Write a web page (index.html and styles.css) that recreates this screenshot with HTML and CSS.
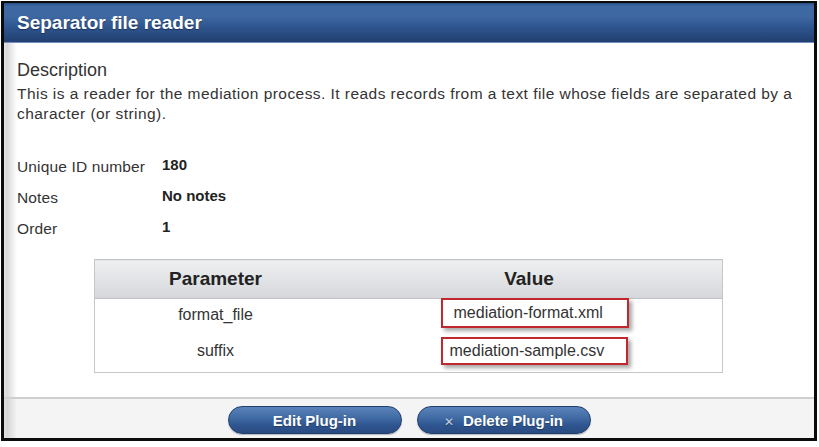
FILE: index.html
```html
<!DOCTYPE html>
<html>
<head>
<meta charset="utf-8">
<title>Separator file reader</title>
<link rel="stylesheet" href="styles.css">
</head>
<body>
<div class="frame">
  <div class="header">Separator file reader</div>
  <div class="content">
    <div class="desc-title">Description</div>
    <p class="desc">This is a reader for the mediation process. It reads records from a text file whose fields are separated by a character (or string).</p>
    <div class="props">
      <div class="label">Unique ID number</div><div class="value">180</div>
      <div class="label">Notes</div><div class="value">No notes</div>
      <div class="label">Order</div><div class="value">1</div>
    </div>
    <table class="params">
      <thead>
        <tr><th class="c1">Parameter</th><th class="c2">Value</th></tr>
      </thead>
      <tbody>
        <tr><td class="c1">format_file</td><td class="c2 val"><span class="mark mark1">mediation-format.xml</span></td></tr>
        <tr><td class="c1">suffix</td><td class="c2 val"><span class="mark mark2">mediation-sample.csv</span></td></tr>
      </tbody>
    </table>
  </div>
  <div class="footer">
    <button class="btn">Edit Plug-in</button>
    <button class="btn"><span class="x">&#x2715;</span>Delete Plug-in</button>
  </div>
</div>
</body>
</html>
```

FILE: styles.css
```css
html, body {
  margin: 0;
  padding: 0;
  background: #fff;
}
body {
  font-family: "Liberation Sans", Arial, sans-serif;
  color: #333;
}
.frame {
  width: 810px;
  margin: 1px 0 0 1px;
  border-style: solid;
  border-color: #0b0b0b;
  border-width: 2px 3px 3px 3px;
  background: #fff;
}
.header {
  height: 39px;
  line-height: 39px;
  padding-left: 13px;
  font-size: 19px;
  font-weight: bold;
  color: #fff;
  background: linear-gradient(#2a4f86 0, #3f69a2 8%, #3e68a1 35%, #2f5690 60%, #223f70 100%);
  border-bottom: 1px solid #7090c0;
  text-shadow: 0 1px 1px rgba(0,0,0,0.4);
}
.content {
  padding: 17px 13px 24px 13px;
  background: linear-gradient(to right, #e2e2e2 0, #d8d8d8 3px, #fff 13px);
}
.desc-title {
  font-size: 18px;
  line-height: 21px;
}
.desc {
  margin: 3px 0 0 0;
  font-size: 15.5px;
  letter-spacing: 0.45px;
  line-height: 20px;
  padding-right: 8px;
}
.props {
  display: grid;
  grid-template-columns: 145px 1fr;
  grid-auto-rows: 31px;
  margin-top: 27px;
}
.label {
  font-size: 15.5px;
  letter-spacing: 0.15px;
  line-height: 31px;
}
.value {
  font-size: 15px;
  line-height: 27px;
  font-weight: bold;
  color: #222;
}
.params {
  width: 629px;
  margin: 15px auto 0 auto;
  position: relative;
  left: -1px;
  border-collapse: collapse;
  border: 1px solid #c6c6c6;
  font-size: 16px;
}
.params th {
  height: 38px;
  padding: 0;
  font-size: 19px;
  font-weight: bold;
  color: #222;
  background: linear-gradient(#eeeff1, #d5d7da);
  border-bottom: 1px solid #c0c2c4;
}
.params td {
  height: 37px;
  padding: 0 0 5px 0;
  box-sizing: border-box;
  text-align: center;
  color: #333;
}
.params .c1 { width: 242px; }
.params th.c2 { text-align: center; }
.params td.val { text-align: left; padding-left: 104px; }
.mark {
  display: inline-block;
  box-sizing: border-box;
  border: 2px solid #c1272d;
  box-shadow: 3px 3px 4px rgba(0,0,0,0.35);
  text-align: left;
  background: #fff;
  vertical-align: middle;
}
.mark1 {
  width: 188px;
  height: 30px;
  line-height: 26px;
  padding-left: 11px;
  margin-top: -4px;
}
.mark2 {
  width: 187px;
  height: 28px;
  line-height: 24px;
  padding-left: 7px;
  margin-top: -1px;
}
.footer {
  border-top: 2px solid #cfcfcf;
  height: 41px;
  display: flex;
  justify-content: center;
  align-items: flex-start;
  gap: 15px;
  padding-top: 7px;
  box-sizing: border-box;
  background: linear-gradient(to right, #e0e0e0 0, #d6d6d6 3px, #f4f4f4 13px);
}
.btn {
  width: 174px;
  height: 28px;
  border: 1px solid #1f3f70;
  border-radius: 14px;
  background: linear-gradient(#5a83ba 0, #3f69a2 45%, #2f5590 70%, #2a4b80 100%);
  color: #fff;
  font-family: "Liberation Sans", Arial, sans-serif;
  font-size: 15px;
  font-weight: bold;
  padding: 0;
  box-shadow: 0 1px 1px rgba(0,0,0,0.25);
  text-shadow: 0 1px 1px rgba(0,0,0,0.3);
}
.x {
  font-weight: normal;
  font-size: 12px;
  color: #c5cedb;
  margin-right: 9px;
}
```
